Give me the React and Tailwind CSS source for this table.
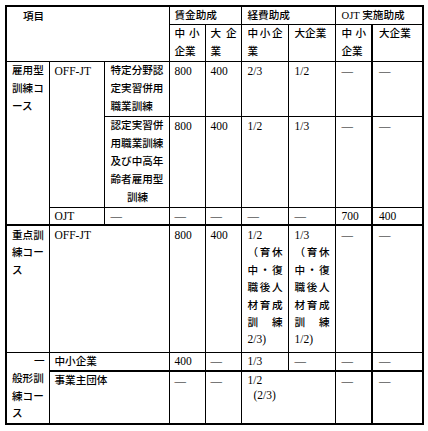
import React from "react";

const font = "font-['Liberation_Serif','Noto_Sans_CJK_JP',serif]";
const td = "border border-black align-top p-0 pl-[5px] pr-[4px] whitespace-nowrap overflow-hidden";
const n = "text-[11.5px]";

// spreads the characters of one line across the cell, like the printed table
const J = ({ text, className = "" }) => (
  <div className={`flex justify-between ${className}`}>
    {[...text].map((c, i) => (
      <span key={i}>{c}</span>
    ))}
  </div>
);

const Lines = ({ lines }) => lines.map((l, i) => <div key={i}>{l}</div>);

const App = () => {
  return (
    <div className={`bg-white w-[428px] h-[431px] pl-[5px] pt-[5px] text-[10.6px] font-medium text-black ${font}`}>
      <table className="table-fixed border-collapse w-[417px] border-2 border-black">
        <colgroup>
          <col className="w-[43px]" />
          <col className="w-[55px]" />
          <col className="w-[65px]" />
          <col className="w-[36px]" />
          <col className="w-[36px]" />
          <col className="w-[47px]" />
          <col className="w-[47px]" />
          <col className="w-[37px]" />
          <col className="w-[51px]" />
        </colgroup>
        <tbody>
          <tr className="h-[18px] leading-[17px]">
            <td colSpan={3} rowSpan={2} className={`${td} pl-[16px] pt-[1px]`}>項目</td>
            <td colSpan={2} className={td}>賃金助成</td>
            <td colSpan={2} className={`${td} pl-[6px]`}>経費助成</td>
            <td colSpan={2} className={`${td} pl-[6px]`}>OJT 実施助成</td>
          </tr>
          <tr className="h-[37px] leading-[18px]">
            <td className={`${td} pl-[4px] pr-[5px]`}>
              <J text="中小" />
              <div>企業</div>
            </td>
            <td className={`${td} pr-[2px]`}>
              <J text="大企" />
              <div>業</div>
            </td>
            <td className={`${td} pl-[6px] pr-[5px]`}>
              <J text="中小企" />
              <div>業</div>
            </td>
            <td className={`${td} pl-[6px]`}>大企業</td>
            <td className={`${td} pl-[6px] pr-[5px]`}>
              <J text="中小" />
              <div>企業</div>
            </td>
            <td className={`${td} pl-[6px] border-l-2`}>大企業</td>
          </tr>

          <tr className="h-[55px] leading-[18px]">
            <td rowSpan={3} className={`${td} border-b-2`}>
              <Lines lines={["雇用型", "訓練コ", "ース"]} />
            </td>
            <td rowSpan={2} className={`${td} ${n}`}>OFF-JT</td>
            <td className={`${td} pl-[6px]`}>
              <Lines lines={["特定分野認", "定実習併用", "職業訓練"]} />
            </td>
            <td className={`${td} ${n}`}>800</td>
            <td className={`${td} ${n}`}>400</td>
            <td className={`${td} ${n} pl-[6px]`}>2/3</td>
            <td className={`${td} ${n} pl-[6px]`}>1/2</td>
            <td className={`${td} ${n} pl-[6px]`}>—</td>
            <td className={`${td} ${n} pl-[6px] border-l-2`}>—</td>
          </tr>
          <tr className="h-[91px] leading-[18px]">
            <td className={`${td} pl-[6px]`}>
              <Lines lines={["認定実習併", "用職業訓練", "及び中高年", "齢者雇用型"]} />
              <div className="text-center">訓練</div>
            </td>
            <td className={`${td} ${n}`}>800</td>
            <td className={`${td} ${n}`}>400</td>
            <td className={`${td} ${n} pl-[6px]`}>1/2</td>
            <td className={`${td} ${n} pl-[6px]`}>1/3</td>
            <td className={`${td} ${n} pl-[6px]`}>—</td>
            <td className={`${td} ${n} pl-[6px] border-l-2`}>—</td>
          </tr>
          <tr className="h-[17px] leading-[16px]">
            <td className={`${td} ${n} border-b-2`}>OJT</td>
            <td className={`${td} ${n} pl-[6px] border-b-2`}>—</td>
            <td className={`${td} ${n} border-b-2`}>—</td>
            <td className={`${td} ${n} border-b-2`}>—</td>
            <td className={`${td} ${n} pl-[6px] border-b-2`}>—</td>
            <td className={`${td} ${n} pl-[6px] border-b-2`}>—</td>
            <td className={`${td} ${n} pl-[6px] border-b-2`}>700</td>
            <td className={`${td} ${n} pl-[6px] border-b-2 border-l-2`}>400</td>
          </tr>

          <tr className="h-[127px] leading-[17.4px]">
            <td className={`${td} pt-[1px]`}>
              <Lines lines={["重点訓", "練コー", "ス"]} />
            </td>
            <td colSpan={2} className={`${td} ${n} pt-[1px]`}>OFF-JT</td>
            <td className={`${td} ${n} pt-[1px]`}>800</td>
            <td className={`${td} ${n} pt-[1px]`}>400</td>
            <td className={`${td} pl-[6px] pr-[5px] pt-[1px]`}>
              <div className={n}>1/2</div>
              <J text="（育休" />
              <J text="中・復" />
              <J text="職後人" />
              <J text="材育成" />
              <J text="訓練" />
              <div className={n}>2/3)</div>
            </td>
            <td className={`${td} pl-[6px] pr-[5px] pt-[1px]`}>
              <div className={n}>1/3</div>
              <J text="（育休" />
              <J text="中・復" />
              <J text="職後人" />
              <J text="材育成" />
              <J text="訓練" />
              <div className={n}>1/2)</div>
            </td>
            <td className={`${td} ${n} pl-[6px] pt-[1px]`}>—</td>
            <td className={`${td} ${n} pl-[6px] pt-[1px] border-l-2`}>—</td>
          </tr>

          <tr className="h-[18px] leading-[17px]">
            <td rowSpan={2} className={`${td} leading-[17.5px]`}>
              <div className="text-right">一</div>
              <Lines lines={["般形訓", "練コー", "ス"]} />
            </td>
            <td colSpan={2} className={`${td} border-b-2`}>中小企業</td>
            <td className={`${td} ${n} border-b-2`}>400</td>
            <td className={`${td} ${n} border-b-2`}>—</td>
            <td className={`${td} ${n} pl-[6px] border-b-2`}>1/3</td>
            <td className={`${td} ${n} pl-[6px] border-b-2`}>—</td>
            <td className={`${td} ${n} pl-[6px] border-b-2`}>—</td>
            <td className={`${td} ${n} pl-[6px] border-b-2 border-l-2`}>—</td>
          </tr>
          <tr className="h-[53px] leading-[18px]">
            <td colSpan={2} className={td}>事業主団体</td>
            <td className={`${td} ${n}`}>—</td>
            <td className={`${td} ${n}`}>—</td>
            <td colSpan={2} className={`${td} ${n} pl-[6px]`}>
              <div className="leading-[15px] pt-[1px]">1/2</div>
              <div className="leading-[15px] pl-[6px]">(2/3)</div>
            </td>
            <td className={`${td} ${n} pl-[6px]`}>—</td>
            <td className={`${td} ${n} pl-[6px] border-l-2`}>—</td>
          </tr>
        </tbody>
      </table>
    </div>
  );
};

export default App;
